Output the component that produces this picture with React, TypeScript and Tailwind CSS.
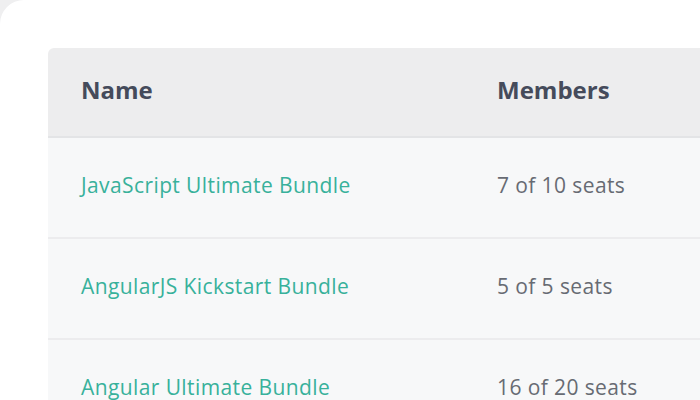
const bundles = [
  { name: 'JavaScript Ultimate Bundle', seats: '7 of 10 seats' },
  { name: 'AngularJS Kickstart Bundle', seats: '5 of 5 seats' },
  { name: 'Angular Ultimate Bundle', seats: '16 of 20 seats' }
]

export default function App() {
  return (
    <div className="h-[400px] w-[700px] overflow-hidden bg-[#efeff0] font-['Open_Sans',sans-serif]">
      <div className="h-full w-[760px] rounded-tl-[24px] bg-white pl-12 pt-12">
        <div className="overflow-hidden rounded-tl-[6px]">
          <div className="flex h-[90px] items-center border-b-2 border-[#e3e4e6] bg-[#ededee] pb-[4px] text-[24px] font-bold leading-none text-[#454b5b]">
            <div className="w-[449px] pl-[33px]">Name</div>
            <div>Members</div>
          </div>
          {bundles.map((b) => (
            <div
              key={b.name}
              className="flex h-[101px] items-center border-b-2 border-[#ececee] bg-[#f7f8f9] pb-[4px] text-[21px] leading-none tracking-[0.4px]"
            >
              <div className="w-[449px] pl-[33px] text-[#38b19b]">{b.name}</div>
              <div className="text-[#676b73]">{b.seats}</div>
            </div>
          ))}
        </div>
      </div>
    </div>
  )
}
